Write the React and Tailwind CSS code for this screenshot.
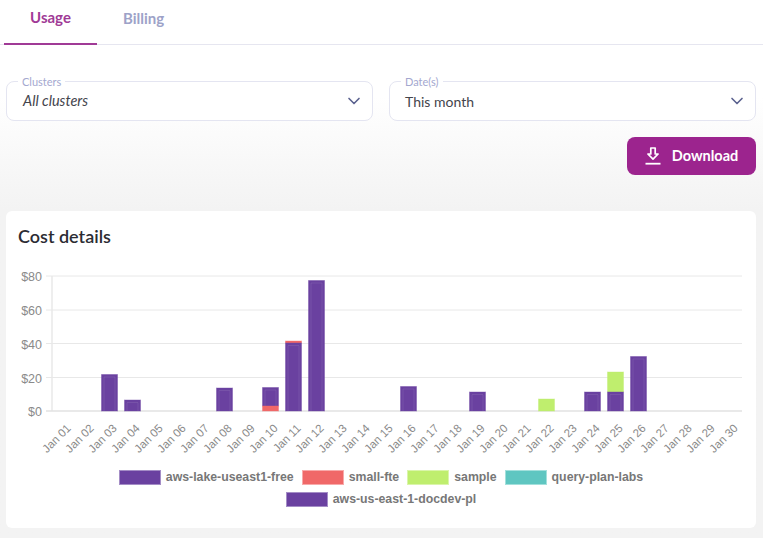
import { ChevronDown } from "lucide-react";

const days = Array.from({ length: 30 }, (_, i) => `Jan ${String(i + 1).padStart(2, "0")}`);

const PURPLE = "#6a41a0";
const RED = "#f06868";
const GREEN = "#bfee6e";

const LEFT = 52;
const STEP = 23;
const BASE = 411;

// day index (1 based), then stacked segments as [top, bottom, colour]
const bars = [
  [3, [[374.5, 411, PURPLE]]],
  [4, [[400, 411, PURPLE]]],
  [8, [[388, 411, PURPLE]]],
  [10, [[387.5, 406, PURPLE], [406, 411, RED]]],
  [11, [[341, 343, RED], [343, 411, PURPLE]]],
  [12, [[280.5, 411, PURPLE]]],
  [16, [[386.5, 411, PURPLE]]],
  [19, [[392, 411, PURPLE]]],
  [22, [[399, 411, GREEN]]],
  [24, [[392, 411, PURPLE]]],
  [25, [[372, 392, GREEN], [392, 411, PURPLE]]],
  [26, [[356.5, 411, PURPLE]]],
];

const legend = [
  ["aws-lake-useast1-free", "bg-[#6a41a0] border-[#a48dc6]"],
  ["small-fte", "bg-[#f06868] border-[#f8aaaa]"],
  ["sample", "bg-[#bfee6e] border-[#daf5aa]"],
  ["query-plan-labs", "bg-[#5fc6c1] border-[#a3e0dc]"],
  ["aws-us-east-1-docdev-pl", "bg-[#6a41a0] border-[#a48dc6]"],
];

const Select = ({ label, value, italic }) => (
  <div className="relative flex h-10 items-center justify-between rounded-lg border border-[#e4e5f1] bg-white pl-4 pr-2">
    <span className="absolute -top-[6px] left-[11px] bg-white px-1 text-[11px] leading-[12px] text-[#a4a8cf]">
      {label}
    </span>
    <span className={`text-[#44444c] ${italic ? "text-[14.5px] italic" : "-ml-px text-[14px]"}`}>{value}</span>
    <ChevronDown size={20} strokeWidth={2} className="text-[#5b628f]" />
  </div>
);

const Chart = () => (
  <svg width="750" height="222" viewBox="6 258 750 222" className="block">
    {[276, 310, 343.5, 377.5].map((y) => (
      <line key={y} x1="46" x2="742" y1={y} y2={y} stroke="#e8e8e8" strokeWidth="1" />
    ))}
    <line x1={LEFT} x2={LEFT} y1="276" y2="411" stroke="#e9e9e9" strokeWidth="1.5" />
    <line x1="46" x2="742" y1={BASE} y2={BASE} stroke="#e2e2e2" strokeWidth="1.5" />
    {[["$80", 276], ["$60", 310], ["$40", 344], ["$20", 378], ["$0", 411]].map(([t, y]) => (
      <text key={t} x="42" y={y + 4.5} textAnchor="end" fontSize="12.5" fill="#8a8a8a" fontFamily="Liberation Sans, Arial, sans-serif">
        {t}
      </text>
    ))}
    {bars.map(([day, segs]) =>
      segs.map(([top, bottom, color]) => {
        const x = LEFT + STEP * (day - 0.5) - 8;
        return (
          <g key={`${day}-${top}`}>
            <rect
              x={x}
              y={top}
              width="16"
              height={bottom - top}
              fill={color}
              stroke={color}
              strokeOpacity="0.4"
              strokeWidth="1"
            />
            {color === PURPLE && (
              <path
                d={`M${x + 2.5} ${bottom}V${top + 2.5}H${x + 13.5}V${bottom}`}
                fill="none"
                stroke="#ffffff"
                strokeOpacity="0.09"
                strokeWidth="1"
              />
            )}
          </g>
        );
      })
    )}
    {days.map((d, i) => {
      const x = LEFT + STEP * (i + 0.5) + 8;
      return (
        <text
          key={d}
          x={x}
          y="429"
          textAnchor="end"
          fontSize="11.5"
          fill="#8a8a8a"
          fontFamily="Liberation Sans, Arial, sans-serif"
          transform={`rotate(-45 ${x} 429)`}
        >
          {d}
        </text>
      );
    })}
  </svg>
);

export default function App() {
  return (
    <div
      className="h-[538px] w-[763px] overflow-hidden bg-gradient-to-b from-white from-[18%] to-[#f3f3f3] to-[39%]"
      style={{ fontFamily: "Lato, 'Noto Sans', sans-serif" }}
    >
      <div className="flex h-[45px] border-b border-[#e6e6f0] pl-1">
        <div className="flex h-[45px] w-[93px] items-center justify-center border-b-2 border-[#a03a96] pb-2 text-[15px] font-bold text-[#a03a96]">
          Usage
        </div>
        <div className="flex h-[44px] w-[93px] items-center justify-center pb-[7px] text-[15px] font-bold text-[#9da2c8]">
          Billing
        </div>
      </div>

      <div className="grid grid-cols-2 gap-4 pl-[6px] pr-[7px] pt-9">
        <Select label="Clusters" value="All clusters" italic />
        <Select label="Date(s)" value="This month" />
      </div>

      <div className="flex justify-end pr-[7px] pt-4">
        <button className="flex h-[38px] w-[129px] items-center justify-center gap-[11px] rounded-lg bg-[#9c248e] text-[14.5px] font-bold text-white">
          <svg width="16" height="18" viewBox="0 0 16 18" fill="none">
            <path d="M5.8 1h4.4v6h2.9L8 12.2 2.9 7h2.9z" stroke="white" strokeWidth="1.7" strokeLinejoin="round" />
            <rect x="0.5" y="15.8" width="15" height="1.8" fill="white" />
          </svg>
          Download
        </button>
      </div>

      <div className="mx-[6px] mt-9 h-[317px] w-[750px] rounded-md bg-white">
        <div className="px-3 pt-[13px] text-[18px] font-semibold leading-6 text-[#2c2c33]">Cost details</div>
        <div className="mt-[10px]">
          <Chart />
        </div>
        <div className="mx-auto -mt-[10px] flex w-[560px] flex-wrap justify-center gap-x-2 gap-y-[7px] text-[12.3px] font-bold leading-[15px] text-[#777]" style={{ fontFamily: "'Liberation Sans', Arial, sans-serif" }}>
          {legend.map(([name, swatch]) => (
            <div key={name} className="flex items-center gap-[5px]">
              <span className={`h-[15px] w-[42px] border ${swatch}`} />
              {name}
            </div>
          ))}
        </div>
      </div>
    </div>
  );
}
